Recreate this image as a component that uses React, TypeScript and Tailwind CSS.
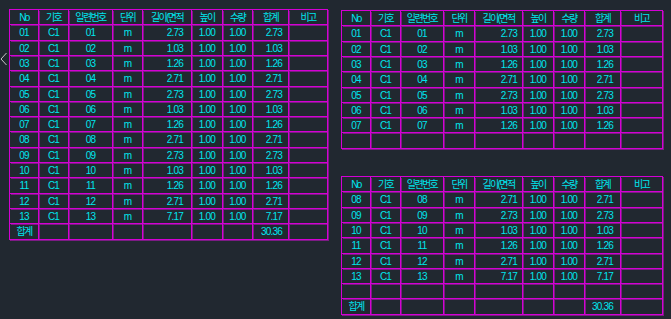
const ROWS = [
  ["01", "2.73"], ["02", "1.03"], ["03", "1.26"], ["04", "2.71"], ["05", "2.73"],
  ["06", "1.03"], ["07", "1.26"], ["08", "2.71"], ["09", "2.73"], ["10", "1.03"],
  ["11", "1.26"], ["12", "2.71"], ["13", "7.17"],
]

const HEAD = ["No", "기호", "일련번호", "단위", "길이(면적", "높이", "수량", "합계", "비고"]

type Align = "c" | "r"
const ALIGN: Align[] = ["c", "c", "c", "c", "r", "c", "c", "r", "c"]

const PITCH = 15.3

const Cell = ({ w, align, pr, head, children }: { w: number; align: Align; pr: number; head: boolean; children?: React.ReactNode }) => (
  <div
    className={`flex items-center h-full border-r border-b border-[#d400d4] shadow-[1px_1px_0_#7c1c84] overflow-hidden whitespace-nowrap ${align === "r" ? "justify-end" : "justify-center"} ${head ? "text-[10px] tracking-[-1.6px]" : ""}`}
    style={{ width: w, paddingRight: align === "r" ? pr : 0 }}
  >
    {children}
  </div>
)

const Sheet = ({ widths, rows, pads }: { widths: number[]; rows: (string | null)[][]; pads: number[] }) => (
  <div className="flex flex-col border-t border-l border-[#d400d4] shadow-[1px_1px_0_#8a188a]">
    {rows.map((r, i) => (
      <div key={i} className="flex" style={{ height: Math.round((i + 1) * PITCH) - Math.round(i * PITCH) }}>
        {widths.map((w, j) => (
          <Cell key={j} w={w} align={i === 0 ? "c" : ALIGN[j]} pr={pads[j]} head={i === 0 || r[j] === "합계"}>
            {r[j] ?? ""}
          </Cell>
        ))}
      </div>
    ))}
  </div>
)

const line = (r: string[]) => [r[0], "C1", r[0], "m", r[1], "1.00", "1.00", r[1], ""]
const blank = ["", "", "", "", "", "", "", "", ""]
const total = ["합계", "", "", "", "", "", "", "30.36", ""]

export default function App() {
  const leftW = [29, 30, 44, 30, 49, 31, 30, 36, 39]
  const rightW = [29, 30, 43, 31, 48, 31, 31, 36, 42]
  return (
    <div
      className="relative w-[671px] h-[319px] bg-[#212830] text-[#00e6ee] text-[10px] tracking-[-0.8px] overflow-hidden flex items-start gap-[13px] pl-[9px] pt-[9px]"
      style={{ fontFamily: '"Liberation Sans", "Noto Sans CJK KR", sans-serif' }}
    >
      <svg className="absolute left-0 top-[52px]" width="8" height="14" viewBox="0 0 8 14">
        <polyline points="6.5,1 1,7 6.5,13" fill="none" stroke="#c8c8c8" strokeWidth="1" />
      </svg>

      <Sheet widths={leftW} pads={[0, 0, 0, 0, 8, 0, 0, 6, 0]} rows={[HEAD, ...ROWS.map(line), total]} />

      <div className="flex flex-col gap-[27px] pt-[1px]">
        <Sheet widths={rightW} pads={[0, 0, 0, 0, 5, 0, 0, 7, 0]} rows={[HEAD, ...ROWS.slice(0, 7).map(line), blank]} />
        <Sheet widths={rightW} pads={[0, 0, 0, 0, 5, 0, 0, 7, 0]} rows={[HEAD, ...ROWS.slice(7).map(line), blank, total]} />
      </div>
    </div>
  )
}
